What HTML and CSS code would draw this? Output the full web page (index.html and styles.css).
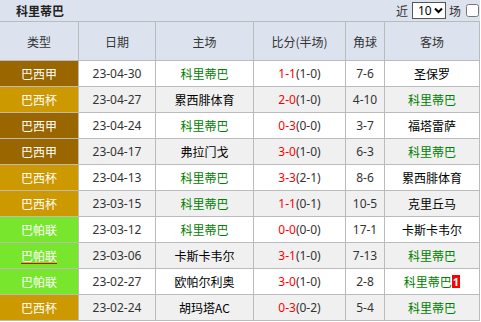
FILE: index.html
```html
<!DOCTYPE html>
<html lang="zh-CN">
<head>
<meta charset="utf-8">
<title>科里蒂巴</title>
<link rel="stylesheet" href="styles.css">
</head>
<body>
<div class="panel">
  <div class="titlebar">
    <span class="title">科里蒂巴</span>
    <div class="filter">
      <span class="lbl">近</span>
      <span class="sel"><span class="sel-val">10</span><svg class="chev" width="9" height="7" viewBox="0 0 9 7"><path d="M1 1.5 L4.5 5 L8 1.5" fill="none" stroke="#000" stroke-width="2"/></svg></span>
      <span class="lbl">场</span>
      <input class="chk" type="checkbox">
    </div>
  </div>
  <table class="matches">
    <thead>
      <tr>
        <th class="c1">类型</th>
        <th class="c2">日期</th>
        <th class="c3">主场</th>
        <th class="c4">比分(半场)</th>
        <th class="c5">角球</th>
        <th class="c6">客场</th>
      </tr>
    </thead>
    <tbody>
      <tr>
        <td class="lg jia">巴西甲</td><td>23-04-30</td><td class="team me">科里蒂巴</td><td><span class="ft">1-1</span>(1-0)</td><td>7-6</td><td class="team">圣保罗</td>
      </tr>
      <tr class="alt">
        <td class="lg bei">巴西杯</td><td>23-04-27</td><td class="team">累西腓体育</td><td><span class="ft">2-0</span>(1-0)</td><td>4-10</td><td class="team me">科里蒂巴</td>
      </tr>
      <tr>
        <td class="lg jia">巴西甲</td><td>23-04-24</td><td class="team me">科里蒂巴</td><td><span class="ft">0-3</span>(0-0)</td><td>3-7</td><td class="team">福塔雷萨</td>
      </tr>
      <tr class="alt">
        <td class="lg jia">巴西甲</td><td>23-04-17</td><td class="team">弗拉门戈</td><td><span class="ft">3-0</span>(1-0)</td><td>6-3</td><td class="team me">科里蒂巴</td>
      </tr>
      <tr>
        <td class="lg bei">巴西杯</td><td>23-04-13</td><td class="team me">科里蒂巴</td><td><span class="ft">3-3</span>(2-1)</td><td>8-6</td><td class="team">累西腓体育</td>
      </tr>
      <tr class="alt">
        <td class="lg bei">巴西杯</td><td>23-03-15</td><td class="team me">科里蒂巴</td><td><span class="ft">1-1</span>(0-1)</td><td>10-5</td><td class="team">克里丘马</td>
      </tr>
      <tr>
        <td class="lg pa">巴帕联</td><td>23-03-12</td><td class="team me">科里蒂巴</td><td><span class="ft">0-0</span>(0-0)</td><td>17-1</td><td class="team">卡斯卡韦尔</td>
      </tr>
      <tr class="alt">
        <td class="lg pa"><span class="hl">巴帕联</span></td><td>23-03-06</td><td class="team">卡斯卡韦尔</td><td><span class="ft">3-1</span>(1-0)</td><td>7-13</td><td class="team me">科里蒂巴</td>
      </tr>
      <tr>
        <td class="lg pa">巴帕联</td><td>23-02-27</td><td class="team">欧帕尔利奥</td><td><span class="ft">3-0</span>(1-0)</td><td>2-8</td><td class="team me">科里蒂巴<span class="badge">1</span></td>
      </tr>
      <tr class="alt">
        <td class="lg bei">巴西杯</td><td>23-02-24</td><td class="team">胡玛塔AC</td><td><span class="ft">0-3</span>(0-2)</td><td>5-4</td><td class="team me">科里蒂巴</td>
      </tr>
    </tbody>
  </table>
</div>
</body>
</html>
```
FILE: styles.css
```css
* { box-sizing: content-box; }
html, body { margin: 0; padding: 0; background: #fff; }
body {
  font-family: "Noto Sans", "Noto Sans CJK SC", sans-serif;
  font-size: 12px;
  color: #333;
}
.panel { width: 480px; }
.titlebar {
  height: 21px;
  background: #dce3ee;
  border-bottom: 1px solid #bbbbbb;
  display: flex;
  align-items: center;
  justify-content: space-between;
}
.title {
  padding-left: 16px;
  font-weight: bold;
  color: #222;
  font-family: "Noto Sans CJK SC", sans-serif;
}
.filter {
  display: flex;
  align-items: center;
  padding-right: 1px;
  font-family: "Noto Sans CJK SC", sans-serif;
}
.lbl { color: #333; }
.sel {
  display: flex;
  align-items: center;
  width: 32px;
  height: 15px;
  margin: 0 3px 0 4px;
  border: 1px solid #555;
  background: #fff;
  color: #000;
  font-family: "Noto Sans", sans-serif;
}
.sel-val { padding-left: 5px; width: 16px; line-height: 15px; }
.chev { display: block; }
.chk {
  width: 13px;
  height: 13px;
  margin: 0 0 0 5px;
}
.matches {
  width: 480px;
  table-layout: fixed;
  border-collapse: separate;
  border-spacing: 0;
}
.matches th, .matches td {
  padding: 0;
  border-right: 1px solid #bbbbbb;
  border-bottom: 1px solid #bbbbbb;
  text-align: center;
  white-space: nowrap;
}
.matches th {
  height: 38px;
  background: #dce3ee;
  font-weight: normal;
  color: #333;
  font-family: "Noto Sans CJK SC", sans-serif;
}
.c1 { width: 78px; }
.c2 { width: 76px; }
.c3 { width: 97px; }
.c4 { width: 91px; }
.c5 { width: 38px; }
.c6 { width: 94px; }
.matches td {
  height: 25px;
  line-height: 25px;
  background: #fff;
}
.matches tr.alt td { background: #f0f0f0; }
.matches td.lg { color: #fff; font-family: "Noto Sans CJK SC", sans-serif; }
.matches td.jia { background: #996600; }
.matches td.bei { background: #cc9900; }
.matches td.pa { background: #78e62c; }
.matches tr.alt td.jia { background: #996600; }
.matches tr.alt td.bei { background: #cc9900; }
.matches tr.alt td.pa { background: #78e62c; }
.team { color: #000; font-family: "Noto Sans CJK SC", sans-serif; }
.team.me { color: #008000; }
.ft { color: #ff0000; }
.hl {
  text-decoration: underline;
  text-decoration-color: #e00000;
  text-underline-offset: 2px;
}
.badge {
  display: inline-block;
  background: #ff0000;
  color: #fff;
  font-weight: bold;
  font-size: 11px;
  line-height: 13px;
  padding: 0 1px;
  vertical-align: 1px;
  font-family: "Noto Sans", sans-serif;
}
```
